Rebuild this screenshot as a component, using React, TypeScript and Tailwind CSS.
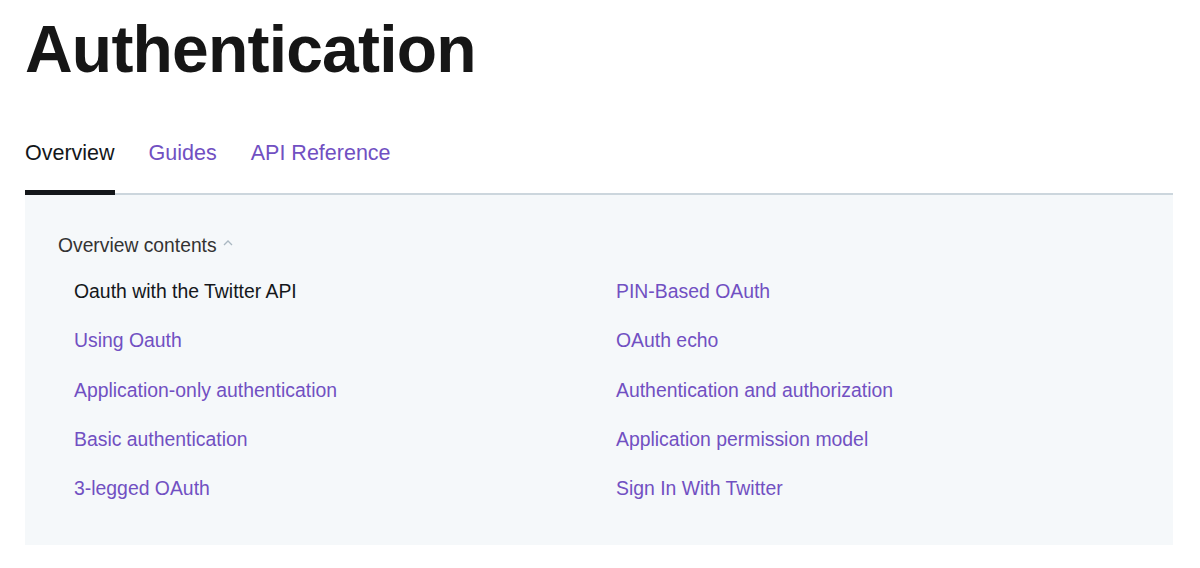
const leftLinks = [
  "Oauth with the Twitter API",
  "Using Oauth",
  "Application-only authentication",
  "Basic authentication",
  "3-legged OAuth",
];

const rightLinks = [
  "PIN-Based OAuth",
  "OAuth echo",
  "Authentication and authorization",
  "Application permission model",
  "Sign In With Twitter",
];

export default function App() {
  return (
    <div className="min-h-[568px] w-[1200px] bg-white font-['Liberation_Sans',Arial,sans-serif]">
      <div className="ml-[25px] w-[1148px] pt-4">
        <h1 className="text-[66px] font-bold leading-[66px] tracking-[-0.8px] text-[#161616]">
          Authentication
        </h1>

        {/* tabs */}
        <div className="mt-[58px] flex gap-[34px] border-b-2 border-[#ccd6dd]">
          <a className="-mb-[2px] border-b-[5px] border-[#14171a] pb-[24px] text-[21.5px] leading-[26px] text-[#14171a]">
            Overview
          </a>
          <a className="pb-[27px] text-[21.5px] leading-[26px] text-[#7150c2]">Guides</a>
          <a className="pb-[27px] text-[21.5px] leading-[26px] text-[#7150c2]">API Reference</a>
        </div>

        {/* contents panel */}
        <div className="bg-[#f5f8fa] pb-[45px] pl-[33px] pt-[39px]">
          <div className="flex items-center gap-[6px] text-[19.3px] leading-6 text-[#333]">
            Overview contents
            <svg width="10" height="7" viewBox="0 0 10 7" className="-mt-[8px]">
              <path d="M1 6 L5 2 L9 6" fill="none" stroke="#aab8c2" strokeWidth="1.3" />
            </svg>
          </div>
          <div className="mt-[21px] grid grid-cols-[542px_1fr] pl-4">
            <div className="flex flex-col gap-y-[25.3px]">
              {leftLinks.map((l, i) => (
                <a
                  key={l}
                  className={`text-[19.4px] leading-6 ${i === 0 ? "text-[#14171a]" : "text-[#7150c2]"}`}
                >
                  {l}
                </a>
              ))}
            </div>
            <div className="flex flex-col gap-y-[25.3px]">
              {rightLinks.map((l) => (
                <a key={l} className="text-[19.4px] leading-6 text-[#7150c2]">
                  {l}
                </a>
              ))}
            </div>
          </div>
        </div>
      </div>
    </div>
  );
}
